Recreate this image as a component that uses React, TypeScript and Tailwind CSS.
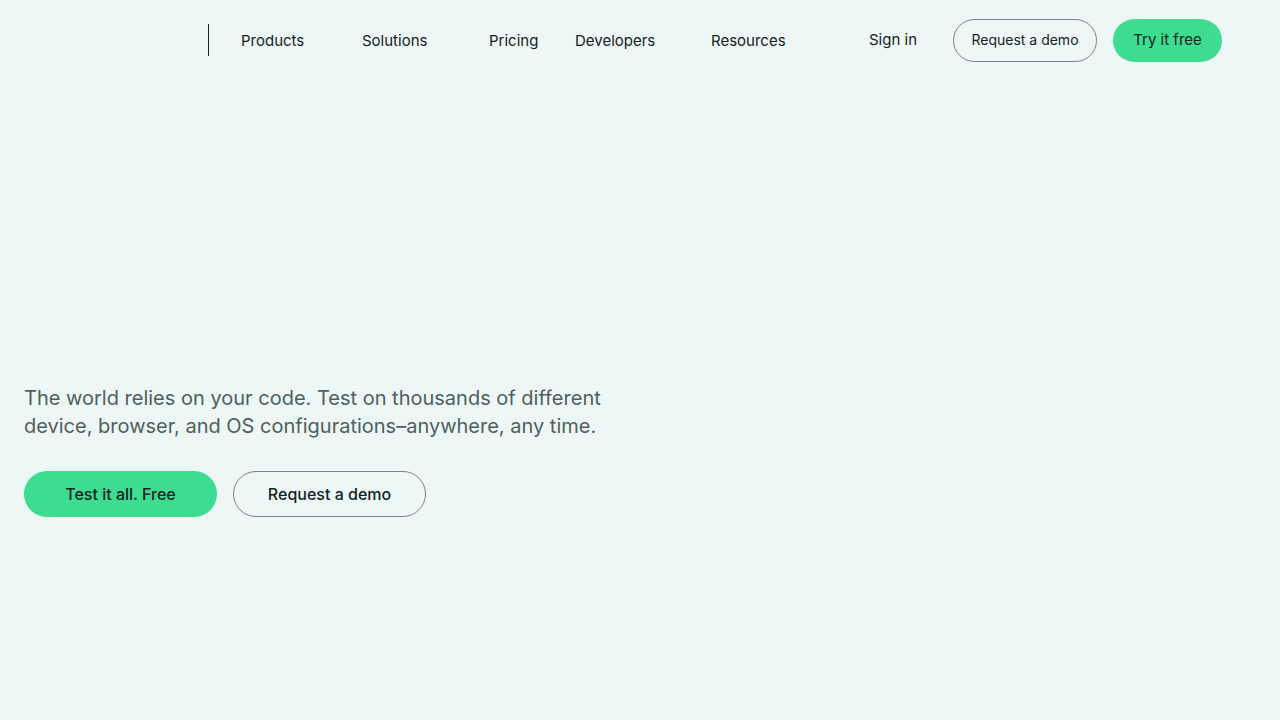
const navItems = [
  { label: 'Products', width: 'w-[89px]' },
  { label: 'Solutions', width: 'w-[95px]' },
  { label: 'Pricing', width: 'w-[54px]' },
  { label: 'Developers', width: 'w-[104px]' },
  { label: 'Resources', width: 'w-[97px]' },
];

const pill = 'flex items-center justify-center rounded-full whitespace-nowrap';

export default function App() {
  return (
    <div className="min-h-screen bg-[#edf7f6] font-['Inter',sans-serif] text-[#132322]">
      <header className="flex h-20 items-center pr-[58px] pl-52">
        <nav aria-label="Main" className="flex h-8 items-center border-l border-[#132322] pt-0.5 pl-8">
          <ul className="flex items-center gap-8 text-[15px] leading-5">
            {navItems.map((item) => (
              <li key={item.label} className={item.width}>
                <a href="#">{item.label}</a>
              </li>
            ))}
          </ul>
        </nav>
        <div className="ml-auto flex items-center gap-4 text-sm">
          <a href="#" className="mr-4 min-w-[52px] text-[15px] leading-5 whitespace-nowrap">Sign in</a>
          <a href="#" className={`${pill} h-[43px] min-w-36 border border-[#748583] px-4`}>Request a demo</a>
          <a href="#" className={`${pill} h-[43px] min-w-[109px] bg-[#3ddc91] px-4 text-[15px] leading-5`}>Try it free</a>
        </div>
      </header>
      <main className="px-6 pt-[304px]">
        <p className="max-w-[620px] text-xl leading-7 text-[#4f5f5d]">
          The world relies on your code. Test on thousands of different device, browser, and OS configurations–anywhere, any time.
        </p>
        <div className="mt-[31px] flex gap-4 text-base font-medium">
          <a href="#" className={`${pill} h-[46px] min-w-[193px] bg-[#3ddc91] px-8`}>Test it all. Free</a>
          <a href="#" className={`${pill} h-[46px] min-w-[193px] border border-[#748583] px-8`}>Request a demo</a>
        </div>
      </main>
    </div>
  );
}
